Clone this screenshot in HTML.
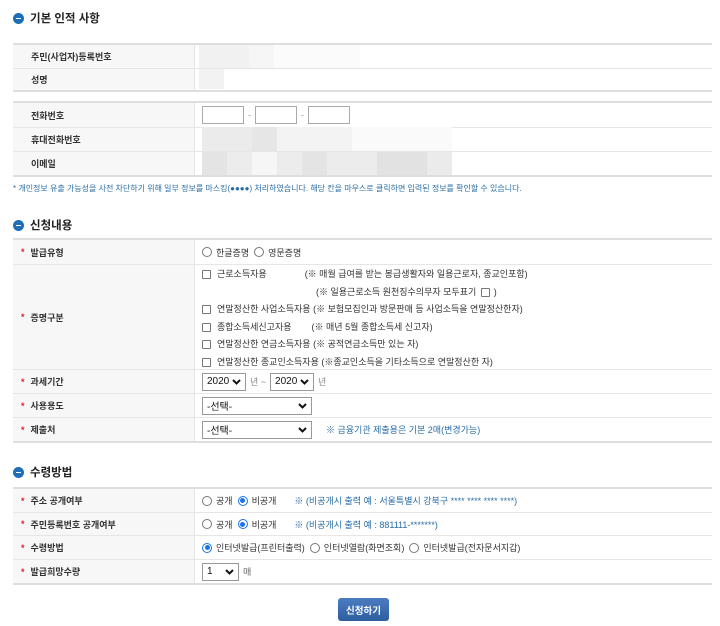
<!DOCTYPE html>
<html><head><meta charset="utf-8"><style>
*{margin:0;padding:0;box-sizing:border-box}
body{width:720px;height:626px;background:#fff;font-family:"Liberation Sans","Noto Sans CJK KR",sans-serif;font-size:9px;color:#333;position:relative;overflow:hidden}
.a{position:absolute}
.h{position:absolute;left:13px;font-size:11.5px;font-weight:bold;color:#222;display:flex;align-items:center;gap:6px}
.h i{display:inline-block;width:11px;height:11px;border-radius:50%;background:#1f6fb8;position:relative}
.h i:after{content:"";position:absolute;left:3px;top:5px;width:5px;height:1px;background:#fff}
.tb{position:absolute;left:13px;width:699px;border-top:2px solid #dedede}
.r{position:relative;border-bottom:1px solid #e6e6e6;display:flex;align-items:center}
.r:last-child{border-bottom:2px solid #dedede}
.l{position:absolute;left:0;top:0;bottom:0;width:182px;background:#f7f7f7;border-right:1px solid #e4e4e4;display:flex;align-items:center;padding-left:18px;font-weight:bold;color:#333}
.l b{color:#d22;margin-left:-10px;margin-right:6px;font-size:9px}
.c{position:absolute;left:188px;top:0;bottom:0;display:flex;align-items:center;white-space:nowrap}
.inp{width:42px;height:18px;border:1px solid #aaa;display:inline-block}
.rd{display:inline-block;width:10px;height:10px;border:1px solid #777;border-radius:50%;margin-right:4px;vertical-align:middle;position:relative}
.rd.on{border-color:#1a73e8}
.rd.on:after{content:"";position:absolute;left:1.5px;top:1.5px;width:5px;height:5px;border-radius:50%;background:#1a73e8}
.cb{display:inline-block;width:9px;height:9px;border:1px solid #777;border-radius:1px;margin-right:6px;vertical-align:middle}
.sel{display:inline-flex;align-items:center;justify-content:space-between;height:18px;border:1px solid #999;padding:0 4px;font-size:10px;color:#111}
.blue{color:#2a6ea6}
.g{position:absolute;background:#eee}
</style></head><body>
<div class="h" style="top:10px"><i></i>기본 인적 사항</div>

<div class="tb" style="top:43px">
<div class="r" style="height:24px"><div class="l">주민(사업자)등록번호</div></div>
<div class="r" style="height:23px"><div class="l">성명</div></div>
</div>
<div class="g" style="left:199px;top:45px;width:50px;height:23px;background:#f1f1f1"></div>
<div class="g" style="left:249px;top:45px;width:25px;height:23px;background:#f6f6f6"></div>
<div class="g" style="left:274px;top:45px;width:86px;height:23px;background:#fbfbfb"></div>
<div class="g" style="left:199px;top:69px;width:25px;height:20px;background:#f2f2f2"></div>

<div class="tb" style="top:101px">
<div class="r" style="height:25px"><div class="l">전화번호</div>
<div class="c" style="left:189px"><span class="inp"></span><span style="margin:0 4px;color:#999">-</span><span class="inp"></span><span style="margin:0 4px;color:#999">-</span><span class="inp"></span></div></div>
<div class="r" style="height:24px"><div class="l">휴대전화번호</div></div>
<div class="r" style="height:25px"><div class="l">이메일</div></div>
</div>
<div class="g" style="left:202px;top:127px;width:50px;height:24px;background:#ebebeb"></div>
<div class="g" style="left:252px;top:127px;width:25px;height:24px;background:#e6e6e6"></div>
<div class="g" style="left:277px;top:127px;width:75px;height:24px;background:#f3f3f3"></div>
<div class="g" style="left:352px;top:127px;width:100px;height:24px;background:#fafafa"></div>
<div class="g" style="left:202px;top:152px;width:25px;height:23px;background:#e4e4e4"></div>
<div class="g" style="left:227px;top:152px;width:25px;height:23px;background:#ececec"></div>
<div class="g" style="left:252px;top:152px;width:25px;height:23px;background:#f6f6f6"></div>
<div class="g" style="left:277px;top:152px;width:25px;height:23px;background:#ececec"></div>
<div class="g" style="left:302px;top:152px;width:25px;height:23px;background:#e4e4e4"></div>
<div class="g" style="left:327px;top:152px;width:50px;height:23px;background:#ececec"></div>
<div class="g" style="left:377px;top:152px;width:50px;height:23px;background:#e2e2e2"></div>
<div class="g" style="left:427px;top:152px;width:25px;height:23px;background:#ebebeb"></div>

<div class="a blue" style="left:13px;top:183px;font-size:8px">* 개인정보 유출 가능성을 사전 차단하기 위해 일부 정보를 마스킹(●●●●) 처리하였습니다. 해당 칸을 마우스로 클릭하면 입력된 정보를 확인할 수 있습니다.</div>

<div class="h" style="top:217px"><i></i>신청내용</div>
<div class="tb" style="top:238px">
<div class="r" style="height:25px"><div class="l"><b>*</b>발급유형</div><div class="c" style="left:189px"><span class="rd"></span>한글증명&nbsp;&nbsp;<span class="rd"></span>영문증명</div></div>
<div class="r" style="height:105px"><div class="l"><b>*</b>증명구분</div>
<div class="c" style="left:189px;display:block;line-height:17.5px;padding-top:1px">
<div><span class="cb"></span>근로소득자용<span style="margin-left:38px">(※ 매월 급여를 받는 봉급생활자와 일용근로자, 종교인포함)</span></div>
<div style="padding-left:114px">(※ 일용근로소득 원천징수의무자 모두표기 <span class="cb" style="margin:0 4px 0 2px"></span>)</div>
<div><span class="cb"></span>연말정산한 사업소득자용 (※ 보험모집인과 방문판매 등 사업소득을 연말정산한자)</div>
<div><span class="cb"></span>종합소득세신고자용<span style="margin-left:20px">(※ 매년 5월 종합소득세 신고자)</span></div>
<div><span class="cb"></span>연말정산한 연금소득자용 (※ 공적연금소득만 있는 자)</div>
<div><span class="cb"></span>연말정산한 종교인소득자용 (※종교인소득을 기타소득으로 연말정산한 자)</div>
</div></div>
<div class="r" style="height:24px"><div class="l"><b>*</b>과세기간</div><div class="c" style="left:189px"><span class="sel" style="width:44px">2020 <svg width="9" height="6"><path d="M1 1l3.5 3.5L8 1" stroke="#111" stroke-width="2" fill="none"/></svg></span><span style="margin:0 4px;color:#888">년 ~</span><span class="sel" style="width:44px">2020 <svg width="9" height="6"><path d="M1 1l3.5 3.5L8 1" stroke="#111" stroke-width="2" fill="none"/></svg></span><span style="margin-left:4px;color:#888">년</span></div></div>
<div class="r" style="height:24px"><div class="l"><b>*</b>사용용도</div><div class="c" style="left:189px"><span class="sel" style="width:110px">-선택- <svg width="9" height="6"><path d="M1 1l3.5 3.5L8 1" stroke="#111" stroke-width="2" fill="none"/></svg></span></div></div>
<div class="r" style="height:25px"><div class="l"><b>*</b>제출처</div><div class="c" style="left:189px"><span class="sel" style="width:110px">-선택- <svg width="9" height="6"><path d="M1 1l3.5 3.5L8 1" stroke="#111" stroke-width="2" fill="none"/></svg></span><span class="blue" style="margin-left:14px">※ 금융기관 제출용은 기본 2매(변경가능)</span></div></div>
</div>

<div class="h" style="top:464px"><i></i>수령방법</div>
<div class="tb" style="top:487px">
<div class="r" style="height:24px"><div class="l"><b>*</b>주소 공개여부</div><div class="c" style="left:189px"><span class="rd"></span>공개&nbsp;&nbsp;<span class="rd on"></span>비공개<span class="blue" style="margin-left:18px">※ (비공개시 출력 예 : 서울특별시 강북구 **** **** **** ****)</span></div></div>
<div class="r" style="height:23px"><div class="l"><b>*</b>주민등록번호 공개여부</div><div class="c" style="left:189px"><span class="rd"></span>공개&nbsp;&nbsp;<span class="rd on"></span>비공개<span class="blue" style="margin-left:18px">※ (비공개시 출력 예 : 881111-*******)</span></div></div>
<div class="r" style="height:24px"><div class="l"><b>*</b>수령방법</div><div class="c" style="left:189px"><span class="rd on"></span>인터넷발급(프린터출력)&nbsp;&nbsp;<span class="rd"></span>인터넷열람(화면조회)&nbsp;&nbsp;<span class="rd"></span>인터넷발급(전자문서지갑)</div></div>
<div class="r" style="height:25px"><div class="l"><b>*</b>발급희망수량</div><div class="c" style="left:189px"><span class="sel" style="width:37px">1 <svg width="9" height="6"><path d="M1 1l3.5 3.5L8 1" stroke="#111" stroke-width="2" fill="none"/></svg></span><span style="margin-left:4px;color:#666">매</span></div></div>
</div>

<div class="a" style="left:338px;top:598px;width:51px;height:23px;border-radius:3px;background:linear-gradient(#4a7cc0,#2d5f9f);color:#fff;font-weight:bold;font-size:9.5px;display:flex;align-items:center;justify-content:center">신청하기</div>
</body></html>
